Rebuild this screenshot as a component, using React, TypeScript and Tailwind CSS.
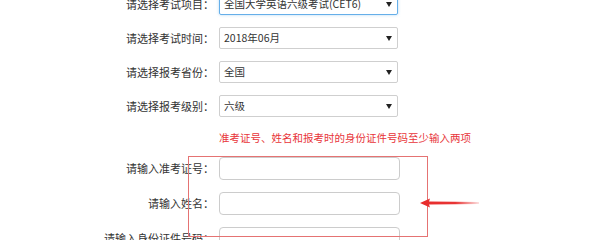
import React from "react";

const font = { fontFamily: '"Noto Sans CJK SC", "Noto Sans", sans-serif' };

const SelectRow = ({ label, value, focused }: { label: string; value: string; focused?: boolean }) => (
  <div className="flex items-center h-[22px]">
    <div className="w-[214px] text-right text-[11px] text-[#333] leading-none">{label}</div>
    <div
      className={
        focused
          ? "ml-[5px] w-[179px] h-[22px] flex items-center justify-between pl-[4px] pr-[5px] border border-[#66afe9] rounded-[2px] shadow-[0_0_3px_rgba(102,175,233,0.5)]"
          : "ml-[5px] w-[179px] h-[22px] flex items-center justify-between pl-[4px] pr-[5px] border border-[#cfcfcf] rounded-[2px]"
      }
    >
      <span className="text-[10.5px] text-[#333] leading-none">{value}</span>
      <svg width="6" height="5" viewBox="0 0 6 5">
        <path d="M0 0 L6 0 L3 5 Z" fill="#222" />
      </svg>
    </div>
  </div>
);

const InputRow = ({ label }: { label: string }) => (
  <div className="flex items-center h-[23px]">
    <div className="w-[214px] text-right text-[11px] text-[#333] leading-none whitespace-nowrap">{label}</div>
    <div className="ml-[5px] w-[181px] h-[23px] border border-[#cccccc] rounded-[4px] bg-white" />
  </div>
);

export default function App() {
  return (
    <div className="relative w-[600px] h-[240px] overflow-hidden bg-white" style={font}>
      <div className="flex flex-col mt-[-7px]">
        <div className="flex flex-col gap-[12px]">
          <SelectRow label="请选择考试项目：" value="全国大学英语六级考试(CET6)" focused />
          <SelectRow label="请选择考试时间：" value="2018年06月" />
          <SelectRow label="请选择报考省份：" value="全国" />
          <SelectRow label="请选择报考级别：" value="六级" />
        </div>
        <div className="mt-[14px] pl-[219px] h-[14px] flex items-center text-[10.5px] text-[#e8353a] leading-none whitespace-nowrap">
          准考证号、姓名和报考时的身份证件号码至少输入两项
        </div>
        <div className="mt-[12px] flex flex-col gap-[12px]">
          <InputRow label="请输入准考证号：" />
          <InputRow label="请输入姓名：" />
          <InputRow label="请输入身份证件号码：" />
        </div>
      </div>

      {/* annotation box + arrow */}
      <div className="absolute left-[188px] top-[156px] w-[240px] h-[81px] border border-[#e57373]" />
      <svg className="absolute left-[419px] top-[197px]" width="62" height="12" viewBox="0 0 62 12">
        <defs>
          <linearGradient id="fade" x1="0" x2="1" y1="0" y2="0">
            <stop offset="0" stopColor="#e82b2b" />
            <stop offset="0.6" stopColor="#e83535" />
            <stop offset="1" stopColor="#e83535" stopOpacity="0.15" />
          </linearGradient>
        </defs>
        <path d="M1 6 L11 1.5 L10 4.5 L60 5 L60 7 L10 7.5 L11 10.5 Z" fill="url(#fade)" />
      </svg>
    </div>
  );
}
